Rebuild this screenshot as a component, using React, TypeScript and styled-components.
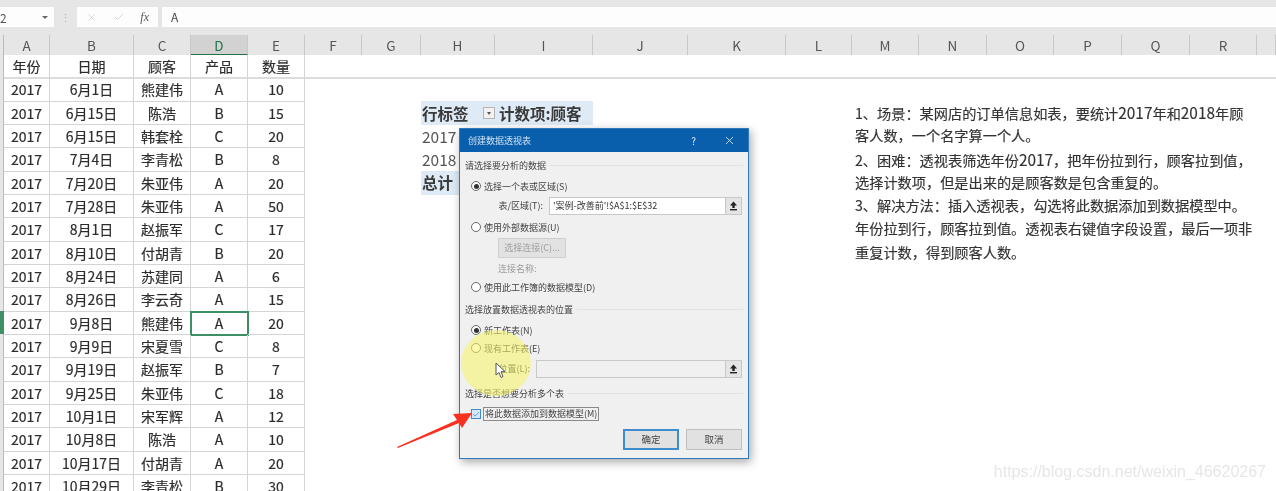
import { Check, X } from 'lucide-react';
import styled, { createGlobalStyle } from 'styled-components';

const columns = [
  { label: 'A', width: 46 },
  { label: 'B', width: 84 },
  { label: 'C', width: 57 },
  { label: 'D', width: 57, active: true },
  { label: 'E', width: 57 },
  { label: 'F', width: 57 },
  { label: 'G', width: 59 },
  { label: 'H', width: 74 },
  { label: 'I', width: 98 },
  { label: 'J', width: 95 },
  { label: 'K', width: 98 },
  { label: 'L', width: 66 },
  { label: 'M', width: 67 },
  { label: 'N', width: 68 },
  { label: 'O', width: 67 },
  { label: 'P', width: 68 },
  { label: 'Q', width: 68 },
  { label: 'R', width: 67 },
  { label: '', width: 19 },
];

const rows = [
  ['6月1日', '熊建伟', 'A', '10'],
  ['6月15日', '陈浩', 'B', '15'],
  ['6月15日', '韩套栓', 'C', '20'],
  ['7月4日', '李青松', 'B', '8'],
  ['7月20日', '朱亚伟', 'A', '20'],
  ['7月28日', '朱亚伟', 'A', '50'],
  ['8月1日', '赵振军', 'C', '17'],
  ['8月10日', '付胡青', 'B', '20'],
  ['8月24日', '苏建同', 'A', '6'],
  ['8月26日', '李云奇', 'A', '15'],
  ['9月8日', '熊建伟', 'A', '20'],
  ['9月9日', '宋夏雪', 'C', '8'],
  ['9月19日', '赵振军', 'B', '7'],
  ['9月25日', '朱亚伟', 'C', '18'],
  ['10月1日', '宋军辉', 'A', '12'],
  ['10月8日', '陈浩', 'A', '10'],
  ['10月17日', '付胡青', 'A', '20'],
  ['10月29日', '李青松', 'B', '30'],
];

const noteLines = [
  '1、场景：某网店的订单信息如表，要统计2017年和2018年顾',
  '客人数，一个名字算一个人。',
  '2、困难：透视表筛选年份2017，把年份拉到行，顾客拉到值，',
  '选择计数项，但是出来的是顾客数是包含重复的。',
  '3、解决方法：插入透视表，勾选将此数据添加到数据模型中。',
  '年份拉到行，顾客拉到值。透视表右键值字段设置，最后一项非',
  '重复计数，得到顾客人数。',
];

const RangeIcon = () => (
  <svg width="9" height="10" viewBox="0 0 9 10">
    <path d="M4.5 0.5 L8 4.5 L5.7 4.5 L5.7 7 L3.3 7 L3.3 4.5 L1 4.5 Z" fill="#222" />
    <rect x="1" y="8" width="7" height="1.4" fill="#222" />
  </svg>
);

const App = () => {
  return (
    <Page>
      <GlobalStyle />
      <FormulaBar>
        <NameBox>
          <span>2</span>
          <NameCaret />
        </NameBox>
        <BarDots>⋮</BarDots>
        <FormulaButtons>
          <X size={11} strokeWidth={1.2} />
          <Check size={12} strokeWidth={1.2} />
          <FxLabel>fx</FxLabel>
        </FormulaButtons>
        <FormulaInput>A</FormulaInput>
      </FormulaBar>

      <ColumnHeaders>
        <RowHeaderStub />
        {columns.map((col) => (
          <ColumnHeader key={col.label || 'end'} $width={col.width} $active={col.active}>
            {col.label}
          </ColumnHeader>
        ))}
      </ColumnHeaders>

      <Sheet>
        <RowHeaderBar>
          <SelectedRowMark />
        </RowHeaderBar>
        <DataTable>
          {['年份', '日期', '顾客', '产品', '数量'].map((title) => (
            <HeadCell key={title}>{title}</HeadCell>
          ))}
          {rows.map((row, index) => (
            <DataRow key={index}>
              <Cell>2017</Cell>
              <Cell>{row[0]}</Cell>
              <Cell>{row[1]}</Cell>
              <Cell $selected={index === 10}>{row[2]}</Cell>
              <Cell>{row[3]}</Cell>
            </DataRow>
          ))}
        </DataTable>

        <Pivot>
          <PivotHead>
            <PivotLabel>
              行标签
              <FilterButton />
            </PivotLabel>
            <span>计数项:顾客</span>
          </PivotHead>
          <PivotRow>2017</PivotRow>
          <PivotRow>2018</PivotRow>
          <PivotTotal>总计</PivotTotal>
        </Pivot>

        <Note>
          {noteLines.map((line) => (
            <NoteLine key={line}>
              {line.split(/(\d{4})/).map((part, i) =>
                /^\d{4}$/.test(part) ? <NoteYear key={i}>{part}</NoteYear> : part,
              )}
            </NoteLine>
          ))}
        </Note>
      </Sheet>

      <Dialog>
        <TitleBar>
          <span>创建数据透视表</span>
          <TitleIcons>
            <span>?</span>
            <X size={13} strokeWidth={1.5} />
          </TitleIcons>
        </TitleBar>
        <DialogBody>
          <SectionTitle $top={5}>
            <span>请选择要分析的数据</span>
          </SectionTitle>
          <RadioRow $top={5}>
            <Radio $checked />
            <span>选择一个表或区域(S)</span>
          </RadioRow>
          <FieldRow $top={3}>
            <FieldLabel $width={84}>表/区域(T):</FieldLabel>
            <FieldInput>'案例-改善前'!$A$1:$E$32</FieldInput>
            <RangeButton>
              <RangeIcon />
            </RangeButton>
          </FieldRow>
          <RadioRow $top={4}>
            <Radio />
            <span>使用外部数据源(U)</span>
          </RadioRow>
          <ConnectionButton>选择连接(C)...</ConnectionButton>
          <ConnectionName>连接名称:</ConnectionName>
          <RadioRow $top={3}>
            <Radio />
            <span>使用此工作簿的数据模型(D)</span>
          </RadioRow>
          <SectionTitle $top={6}>
            <span>选择放置数据透视表的位置</span>
          </SectionTitle>
          <RadioRow $top={5}>
            <Radio $checked />
            <span>新工作表(N)</span>
          </RadioRow>
          <RadioRow $top={2}>
            <Radio />
            <span>现有工作表(E)</span>
          </RadioRow>
          <FieldRow $top={4}>
            <FieldLabel $width={71}>位置(L):</FieldLabel>
            <FieldInput $wide />
            <RangeButton>
              <RangeIcon />
            </RangeButton>
          </FieldRow>
          <SectionTitle $top={7}>
            <span>选择是否想要分析多个表</span>
          </SectionTitle>
          <CheckRow>
            <CheckBox>
              <Check size={9} strokeWidth={2} color="#2b6cb0" />
            </CheckBox>
            <CheckLabel>将此数据添加到数据模型(M)</CheckLabel>
          </CheckRow>
          <DialogFooter>
            <FooterButton $primary>确定</FooterButton>
            <FooterButton>取消</FooterButton>
          </DialogFooter>
        </DialogBody>
      </Dialog>

      <CursorHalo />
      <CursorArrow width="12" height="17" viewBox="0 0 12 17">
        <path d="M1 1 L1 13 L4 10.5 L6 15.5 L8 14.6 L6 9.8 L10 9.5 Z" fill="#fff" stroke="#555" strokeWidth="1" />
      </CursorArrow>
      <RedArrow width="80" height="46" viewBox="0 0 80 46">
        <path d="M0 42 L60 15 L56 9 L75 8 L65 23 L62 18 L1 43 Z" fill="#f8301f" />
      </RedArrow>
      <Watermark>https://blog.csdn.net/weixin_46620267</Watermark>
    </Page>
  );
};

const GlobalStyle = createGlobalStyle`
  html, body {
    margin: 0;
    background: #fff;
    overflow: hidden;
  }
  * {
    box-sizing: border-box;
  }
`;

const Page = styled.div`
  position: relative;
  width: 1276px;
  height: 491px;
  overflow: hidden;
  color: #2c2c2c;
  font-family: 'Noto Sans CJK SC', 'Noto Sans', sans-serif;
  filter: blur(0.45px);
`;

const FormulaBar = styled.div`
  display: flex;
  align-items: stretch;
  height: 35px;
  padding: 7px 0 8px;
  background: #e6e6e6;
`;

const NameBox = styled.div`
  display: flex;
  align-items: center;
  justify-content: space-between;
  width: 54px;
  padding: 0 6px 0 0;
  background: #fdfdfd;
  font-size: 12px;
  color: #555;
`;

const NameCaret = styled.i`
  width: 0;
  height: 0;
  border-left: 3px solid transparent;
  border-right: 3px solid transparent;
  border-top: 3px solid #666;
`;

const BarDots = styled.div`
  width: 23px;
  text-align: center;
  font-size: 11px;
  line-height: 20px;
  color: #aaa;
`;

const FormulaButtons = styled.div`
  display: flex;
  align-items: center;
  justify-content: space-between;
  width: 81px;
  padding: 0 9px;
  margin-right: 4px;
  background: #fdfdfd;
  color: #bdbdbd;
`;

const FxLabel = styled.span`
  font-family: 'Liberation Serif', serif;
  font-style: italic;
  font-size: 12px;
  color: #555;
`;

const FormulaInput = styled.div`
  flex: 1;
  padding-left: 9px;
  background: #fdfdfd;
  font-size: 12px;
  line-height: 20px;
  color: #444;
`;

const ColumnHeaders = styled.div`
  display: flex;
  height: 20px;
  background: #e6e6e6;
`;

const RowHeaderStub = styled.div`
  width: 4px;
  border-right: 1px solid #bbb;
`;

const ColumnHeader = styled.div<{ $width: number; $active?: boolean }>`
  width: ${(p) => p.$width}px;
  text-align: center;
  font-size: 13.5px;
  line-height: 20px;
  color: ${(p) => (p.$active ? '#1f7246' : '#555')};
  background: ${(p) => (p.$active ? '#d2d2d2' : 'transparent')};
  border-right: 1px solid #c8c8c8;
  border-bottom: ${(p) => (p.$active ? '1px solid #217346' : 'none')};
`;

const Sheet = styled.div`
  position: relative;
  display: flex;
  align-items: flex-start;
  height: 436px;
  background: #fff;

  &::before {
    content: '';
    position: absolute;
    left: 0;
    right: 0;
    top: 22px;
    height: 2px;
    background: #dcdcdc;
  }
`;

const RowHeaderBar = styled.div`
  position: relative;
  flex: none;
  width: 4px;
  height: 100%;
  background: #e6e6e6;
  border-right: 1px solid #bbb;
`;

const SelectedRowMark = styled.div`
  position: absolute;
  top: 256px;
  left: 0;
  width: 4px;
  height: 23px;
  background: #3f8f66;
`;

const DataTable = styled.div`
  position: relative;
  flex: none;
  display: grid;
  grid-template-columns: 46px 84px 57px 57px 57px;
  grid-auto-rows: 23.34px;
  -webkit-text-stroke: 0.2px #333;
`;

const HeadCell = styled.div`
  text-align: center;
  font-size: 14px;
  line-height: 23px;
  border-right: 1px solid #d4d4d4;
`;

const DataRow = styled.div`
  display: contents;
`;

const Cell = styled.div<{ $selected?: boolean }>`
  position: relative;
  text-align: center;
  font-size: 14px;
  line-height: 23px;
  border-right: 1px solid #d4d4d4;
  border-bottom: 1px solid #d4d4d4;
  outline: ${(p) => (p.$selected ? '2px solid #3f8f66' : 'none')};
  outline-offset: -1px;
`;

const Pivot = styled.div`
  flex: none;
  width: 172px;
  margin: 46px 0 0 116px;
  font-size: 15.5px;
  color: #555;
`;

const PivotHead = styled.div`
  display: flex;
  height: 24px;
  line-height: 24px;
  font-weight: 700;
  white-space: nowrap;
  color: #3a3a3a;
  background: #deeaf5;
`;

const PivotLabel = styled.div`
  display: flex;
  align-items: center;
  width: 78px;
  padding-left: 1px;
`;

const FilterButton = styled.i`
  flex: none;
  position: relative;
  width: 12px;
  height: 12px;
  margin-left: 14px;
  background: #f2f2f2;
  border: 1px solid #b5b5b5;

  &::after {
    content: '';
    position: absolute;
    left: 3px;
    top: 4px;
    border-left: 2.5px solid transparent;
    border-right: 2.5px solid transparent;
    border-top: 3px solid #555;
  }
`;

const PivotRow = styled.div`
  height: 23px;
  padding-left: 1px;
  line-height: 23px;
`;

const PivotTotal = styled(PivotRow)`
  height: 24px;
  font-weight: 700;
  color: #3a3a3a;
  background: #deeaf5;
`;

const Note = styled.div`
  flex: none;
  width: 410px;
  margin: 46px 0 0 262px;
  font-size: 14.2px;
  line-height: 23.3px;
  color: #333;
  -webkit-text-stroke: 0.15px #333;
`;

const NoteLine = styled.div`
  height: 23.3px;
  white-space: nowrap;
`;

const NoteYear = styled.span`
  font-size: 15.4px;
`;

const Dialog = styled.div`
  position: absolute;
  left: 459px;
  top: 128px;
  width: 290px;
  height: 331px;
  display: flex;
  flex-direction: column;
  background: #f0f0f0;
  border: 1px solid #2f79b8;
  box-shadow: 2px 3px 9px rgba(0, 0, 0, 0.35);
  font-size: 9px;
  color: #444;
`;

const TitleBar = styled.div`
  flex: none;
  display: flex;
  align-items: center;
  justify-content: space-between;
  height: 23px;
  padding: 0 12px 0 8px;
  background: #0a5fad;
  color: #cfe1f3;
`;

const TitleIcons = styled.div`
  display: flex;
  align-items: center;
  gap: 27px;
  font-size: 10px;
  color: #e8f0f8;
`;

const DialogBody = styled.div`
  flex: 1;
  display: flex;
  flex-direction: column;
  padding: 0 5px;
`;

const SectionTitle = styled.div<{ $top: number }>`
  display: flex;
  align-items: center;
  gap: 4px;
  height: 16px;
  margin-top: ${(p) => p.$top}px;
  white-space: nowrap;

  &::after {
    content: '';
    flex: 1;
    height: 1px;
    background: #e2e2e2;
  }
`;

const RadioRow = styled.div<{ $top: number }>`
  display: flex;
  align-items: center;
  gap: 3px;
  height: 16px;
  margin-top: ${(p) => p.$top}px;
  padding-left: 6px;
  white-space: nowrap;
`;

const Radio = styled.i<{ $checked?: boolean }>`
  flex: none;
  position: relative;
  width: 10px;
  height: 10px;
  border: 1px solid #6a6a6a;
  border-radius: 50%;
  background: #fff;

  &::after {
    content: '';
    display: ${(p) => (p.$checked ? 'block' : 'none')};
    position: absolute;
    inset: 1.5px;
    border-radius: 50%;
    background: #333;
  }
`;

const FieldRow = styled.div<{ $top: number }>`
  display: flex;
  align-items: stretch;
  height: 18px;
  margin-top: ${(p) => p.$top}px;
`;

const FieldLabel = styled.div<{ $width: number }>`
  flex: none;
  width: ${(p) => p.$width}px;
  padding-right: 6px;
  text-align: right;
  line-height: 18px;
  white-space: nowrap;
`;

const FieldInput = styled.div<{ $wide?: boolean }>`
  flex: 1;
  padding-left: 3px;
  border: 1px solid #c8c8c8;
  background: ${(p) => (p.$wide ? '#f0f0f0' : '#fff')};
  line-height: 16px;
  color: #333;
  white-space: nowrap;
`;

const RangeButton = styled.div`
  flex: none;
  display: flex;
  align-items: center;
  justify-content: center;
  width: 16px;
  margin-right: 1px;
  background: #e4e4e4;
  border: 1px solid #c8c8c8;
  border-left: none;
`;

const ConnectionButton = styled.div`
  width: 68px;
  height: 20px;
  margin: 3px 0 0 33px;
  text-align: center;
  line-height: 18px;
  color: #a0a0a0;
  background: #e2e2e2;
  border: 1px solid #cfcfcf;
`;

const ConnectionName = styled.div`
  height: 14px;
  margin: 4px 0 0 33px;
  line-height: 14px;
  color: #9a9a9a;
`;

const CheckRow = styled.div`
  display: flex;
  align-items: center;
  gap: 2px;
  height: 14px;
  margin-top: 6px;
  padding-left: 6px;
`;

const CheckBox = styled.i`
  flex: none;
  display: flex;
  align-items: center;
  justify-content: center;
  width: 10px;
  height: 10px;
  background: #d6e9f8;
  border: 1px solid #3f8ccc;
`;

const CheckLabel = styled.div`
  height: 14px;
  padding: 0 1px;
  line-height: 12px;
  white-space: nowrap;
  border: 1px solid #8a8a8a;
`;

const DialogFooter = styled.div`
  display: flex;
  justify-content: flex-end;
  gap: 7px;
  margin-top: 8px;
  padding-right: 1px;
`;

const FooterButton = styled.div<{ $primary?: boolean }>`
  width: 56px;
  height: 21px;
  text-align: center;
  font-size: 9.5px;
  line-height: ${(p) => (p.$primary ? '17px' : '19px')};
  background: #e1e1e1;
  border: ${(p) => (p.$primary ? '2px solid #3f8ccc' : '1px solid #c0c0c0')};
`;

const CursorHalo = styled.div`
  position: absolute;
  left: 461px;
  top: 330px;
  width: 70px;
  height: 66px;
  border-radius: 50%;
  background: rgba(245, 245, 100, 0.55);
`;

const CursorArrow = styled.svg`
  position: absolute;
  left: 495px;
  top: 362px;
`;

const RedArrow = styled.svg`
  position: absolute;
  left: 397px;
  top: 405px;
`;

const Watermark = styled.div`
  position: absolute;
  right: 10px;
  top: 463px;
  font-family: 'Liberation Sans', sans-serif;
  font-size: 16px;
  line-height: 18px;
  color: #e6e6e6;
`;

export default App;
